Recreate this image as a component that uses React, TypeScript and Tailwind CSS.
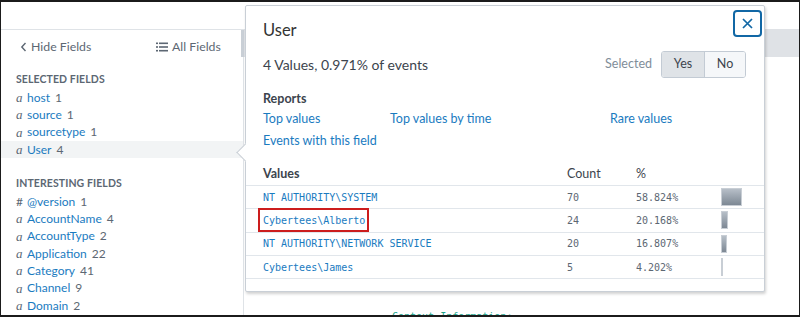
import React from 'react'

const selectedFields = [
  { type: 'a', name: 'host', count: 1 },
  { type: 'a', name: 'source', count: 1 },
  { type: 'a', name: 'sourcetype', count: 1 },
  { type: 'a', name: 'User', count: 4, active: true },
]

const interestingFields = [
  { type: '#', name: '@version', count: 1 },
  { type: 'a', name: 'AccountName', count: 4 },
  { type: 'a', name: 'AccountType', count: 2 },
  { type: 'a', name: 'Application', count: 22 },
  { type: 'a', name: 'Category', count: 41 },
  { type: 'a', name: 'Channel', count: 9 },
  { type: 'a', name: 'Domain', count: 2 },
]

const values = [
  { value: 'NT AUTHORITY\\SYSTEM', count: 70, pct: 58.824 },
  { value: 'Cybertees\\Alberto', count: 24, pct: 20.168, marked: true },
  { value: 'NT AUTHORITY\\NETWORK SERVICE', count: 20, pct: 16.807 },
  { value: 'Cybertees\\James', count: 5, pct: 4.202 },
]

function FieldRow({ f }: { f: { type: string; name: string; count: number; active?: boolean } }) {
  return (
    <div className={`flex items-center h-[17.3px] pl-[15px] ${f.active ? 'bg-[#f2f4f5]' : ''}`}>
      {f.type === '#' ? (
        <span className="w-[11px] text-[12px] text-[#5c6773]">#</span>
      ) : (
        <span className="w-[11px] text-[13px] italic text-[#5c6773] font-['Liberation_Serif',serif]">a</span>
      )}
      <span className="text-[#1a7bbf]">{f.name}</span>
      <span className="ml-[5px] text-[#5c6773]">{f.count}</span>
    </div>
  )
}

export default function App() {
  return (
    <div className="relative w-[800px] h-[317px] overflow-hidden bg-white border-x border-t-2 border-b-2 border-[#1b1b1b] font-['Lato',sans-serif] text-[12px]">
      <div className="h-[27px]" />
      <div className="flex h-[290px]">
        {/* sidebar */}
        <div className="relative w-[243px] shrink-0 border-t border-r border-[#dfe3e7]">
          <div className="absolute right-[-1px] top-0 w-[3px] h-[27px] bg-[#c9cfd6]" />
          <div className="flex items-center h-[34px] text-[#5c6773] text-[12.3px]">
            <div className="flex items-center pl-[19px] w-[155px]">
              <svg width="7" height="10" viewBox="0 0 7 10" className="mr-[4px]">
                <path d="M5.5 1 L1.8 5 L5.5 9" fill="none" stroke="#5c6773" strokeWidth="1.4" />
              </svg>
              Hide Fields
            </div>
            <div className="flex items-center">
              <svg width="12" height="10" viewBox="0 0 12 10" className="mr-[4px]">
                <rect x="0" y="0.5" width="2" height="1.6" fill="#5c6773" />
                <rect x="3" y="0.5" width="9" height="1.6" fill="#5c6773" />
                <rect x="0" y="4.2" width="2" height="1.6" fill="#5c6773" />
                <rect x="3" y="4.2" width="9" height="1.6" fill="#5c6773" />
                <rect x="0" y="7.9" width="2" height="1.6" fill="#5c6773" />
                <rect x="3" y="7.9" width="9" height="1.6" fill="#5c6773" />
              </svg>
              All Fields
            </div>
          </div>
          <div className="pl-[15px] mt-[8px] h-[14px] text-[10.5px] font-bold text-[#5c6773] tracking-[0.1px]">SELECTED FIELDS</div>
          <div className="mt-[3px]">
            {selectedFields.map((f) => <FieldRow key={f.name} f={f} />)}
          </div>
          <div className="pl-[15px] mt-[18px] h-[14px] text-[10.5px] font-bold text-[#5c6773] tracking-[0.1px]">INTERESTING FIELDS</div>
          <div className="mt-[3px]">
            {interestingFields.map((f) => <FieldRow key={f.name} f={f} />)}
          </div>
        </div>

        {/* main area behind the popover */}
        <div className="flex-1 flex flex-col">
          <div className="h-[28px] bg-[#dfe2e6]" />
          <div className="flex-1" />
          <div className="pl-[148px] -mb-[5px] h-[14px] leading-[14px] text-[10px] text-[#1ea58c] font-['DejaVu_Sans_Mono',monospace]">
            Context Information:
          </div>
        </div>
      </div>

      {/* popover */}
      <div className="absolute left-[244px] top-[3px] w-[520px] h-[287px] bg-white border border-[#c9cfd6] rounded-[2px] shadow-[1px_2px_3px_rgba(0,0,0,0.18)]">
        <div className="absolute left-[-7px] top-[140px] w-[13px] h-[13px] rotate-45 bg-white border-l border-b border-[#c9cfd6]" />
        <button className="absolute right-[2px] top-[4px] w-[29px] h-[27px] flex items-center justify-center rounded-[4px] border-2 border-[#1167a5] bg-white">
          <svg width="11" height="11" viewBox="0 0 11 11">
            <path d="M1 1 L10 10 M10 1 L1 10" stroke="#1167a5" strokeWidth="1.7" />
          </svg>
        </button>
        <div className="relative px-[17px] pt-[13px]">
          <div className="text-[16.5px] leading-[22px] text-[#333]">User</div>
          <div className="flex items-center h-[27px] mt-[10px]">
            <div className="flex-1 text-[14px] text-[#3c444d]">4 Values, 0.971% of events</div>
            <div className="text-[12.5px] text-[#818d99] mr-[9px]">Selected</div>
            <div className="flex h-[27px] mr-[1px] rounded-[3px] border border-[#c3cbd4] overflow-hidden text-[12.5px]">
              <div className="w-[43px] flex items-center justify-center bg-[#dfe3e7] text-[#3c444d] border-r border-[#c3cbd4]">Yes</div>
              <div className="w-[40px] flex items-center justify-center bg-[#f5f7f9] text-[#3c444d]">No</div>
            </div>
          </div>
          <div className="mt-[13px] leading-[16px] text-[12.5px] font-bold text-[#3c444d]">Reports</div>
          <div className="flex mt-[1px] leading-[22px] text-[12.5px] text-[#1a7bbf]">
            <span className="w-[127px]">Top values</span>
            <span className="w-[220px]">Top values by time</span>
            <span>Rare values</span>
          </div>
          <div className="leading-[22px] text-[12.5px] text-[#1a7bbf]">Events with this field</div>
        </div>

        <div className="mt-[11px]">
          <div className="flex items-center h-[23px] border-b border-[#e1e6eb] text-[12.5px] text-[#3c444d]">
            <div className="w-[321px] pl-[17px] font-bold">Values</div>
            <div className="w-[69px]">Count</div>
            <div>%</div>
          </div>
          {values.map((v) => (
            <div key={v.value} className="flex items-center h-[23.3px] border-b border-[#e1e6eb] text-[10px] font-['DejaVu_Sans_Mono',monospace]">
              <div className="w-[321px] pl-[17px]">
                <span className="relative text-[#1a7bbf]">
                  {v.value}
                  {v.marked && <span className="absolute -left-[5px] -right-[4px] -top-[7px] -bottom-[6px] border-2 border-[#cc1d1d]" />}
                </span>
              </div>
              <div className="w-[69px] text-[#5c6773]">{v.count}</div>
              <div className="w-[85px] text-[#5c6773]">{v.pct.toFixed(3)}%</div>
              <div className="h-[18px] flex">
                <div
                  className="h-full bg-linear-to-b from-[#b7bfc8] to-[#7d8894] border border-[#c8ced5]"
                  style={{ width: Math.max(2, Math.round(v.pct * 0.36)) }}
                />
              </div>
            </div>
          ))}
        </div>
      </div>
    </div>
  )
}
